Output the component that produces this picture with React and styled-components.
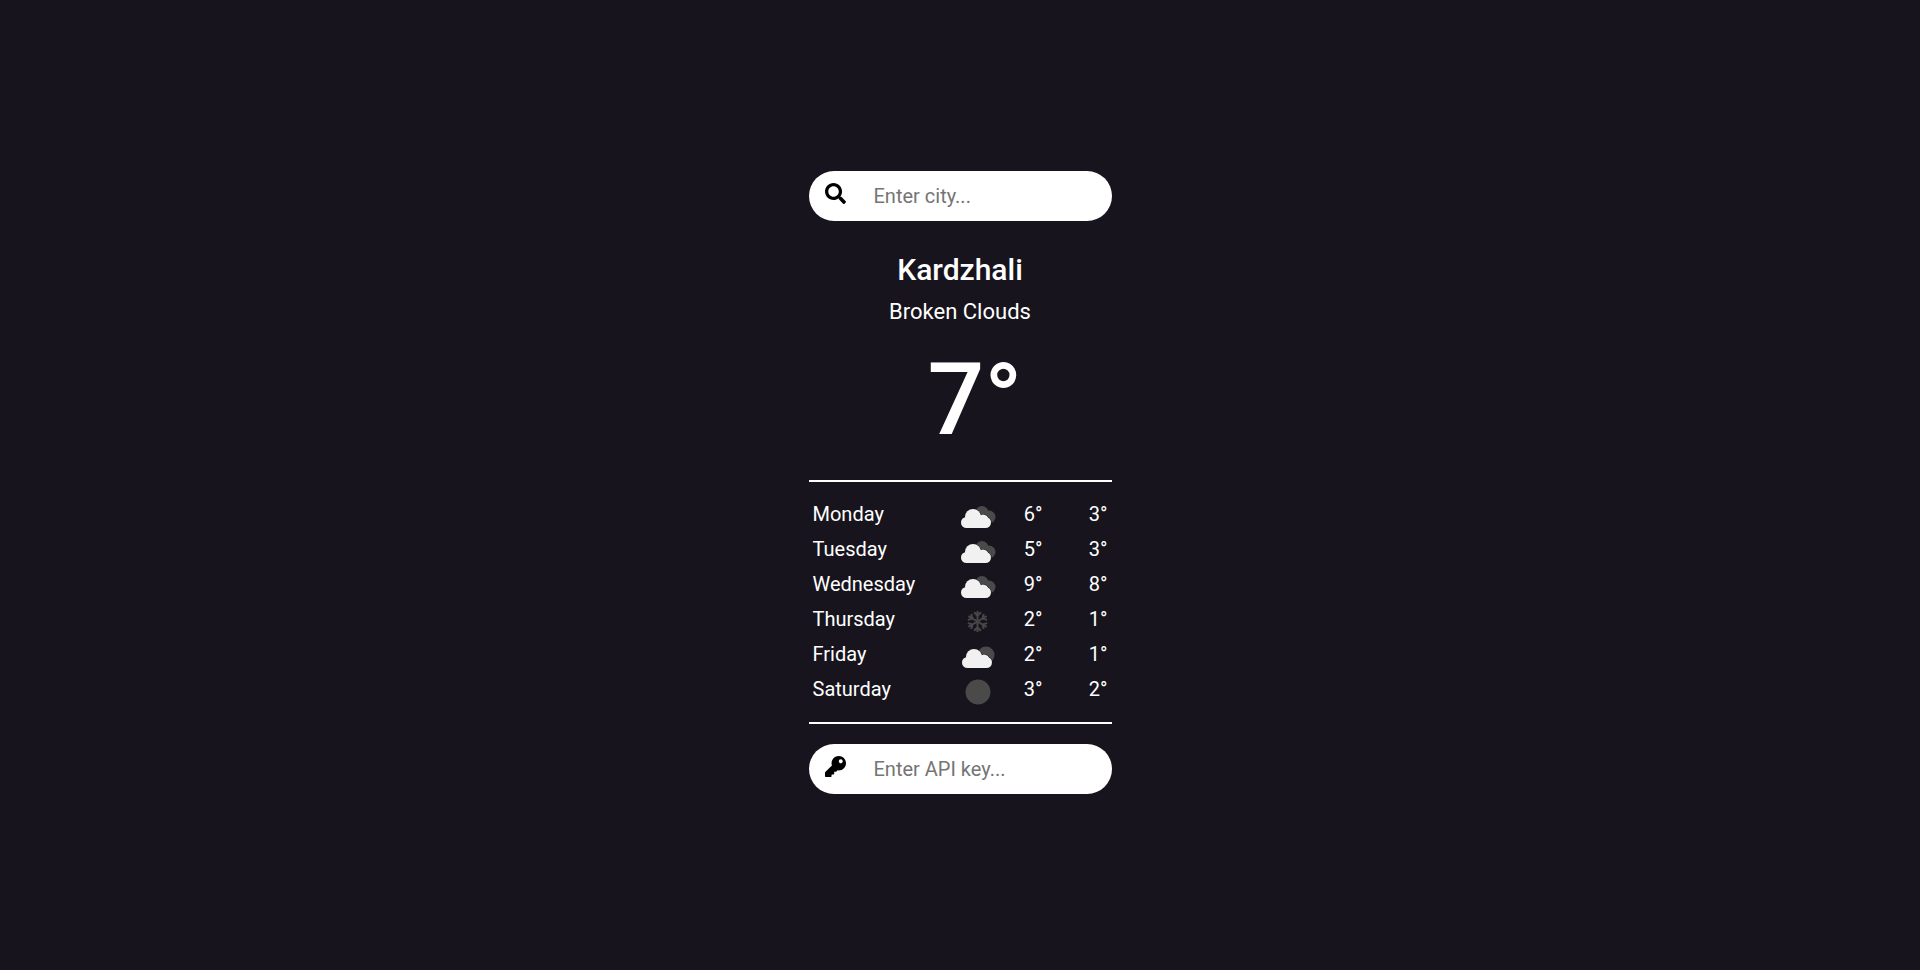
import React from "react";
import styled, { createGlobalStyle } from "styled-components";
import { FaSearch, FaKey } from "react-icons/fa";

const Global = createGlobalStyle`
  html, body { margin: 0; padding: 0; height: 100%; background: #17141d; }
  body { font-family: Roboto, "Liberation Sans", sans-serif; color: #fff; }
  input::placeholder { color: #757575; opacity: 1; }
`;

const Page = styled.main`
  min-height: 970px;
  box-sizing: border-box;
  padding-top: 171px;
  display: flex;
  justify-content: center;
  background: #17141d;
`;

const Card = styled.div`
  width: 303px;
  display: flex;
  flex-direction: column;
`;

const Field = styled.label`
  height: 50px;
  margin-top: ${(p) => p.$top || 0}px;
  border-radius: 25px;
  background: #fff;
  display: flex;
  align-items: center;
  padding-left: 16px;
  color: #000;
`;

const IconSlot = styled.span`
  width: 21px;
  height: 21px;
  margin-right: 28px;
  margin-top: -5px;
  display: flex;
  align-items: center;
  justify-content: center;
  flex: none;
`;

const TextInput = styled.input`
  border: 0;
  outline: 0;
  background: transparent;
  flex: 1;
  min-width: 0;
  padding: 0;
  font: 400 20px Roboto, sans-serif;
  color: #000;
`;

const City = styled.h1`
  margin: 32px 0 0;
  height: 34px;
  line-height: 34px;
  text-align: center;
  font-size: 30px;
  font-weight: 500;
`;

const Condition = styled.p`
  margin: 11px 0 0;
  height: 28px;
  line-height: 28px;
  text-align: center;
  font-size: 22px;
`;

const Temperature = styled.div`
  margin-top: 18px;
  height: 112px;
  line-height: 112px;
  text-align: center;
  font-size: 100px;
  font-weight: 500;
  padding-left: 30px;
`;

const Divider = styled.hr`
  margin: ${(p) => p.$top}px 0 0;
  height: 2px;
  border: 0;
  background: #fff;
`;

const Forecast = styled.div`
  margin-top: 15px;
  display: flex;
  flex-direction: column;
`;

const Row = styled.div`
  height: 35px;
  display: grid;
  grid-template-columns: 1fr 48px 41px 65px;
  align-items: center;
  padding: 0 4px;
  font-size: 20px;
`;

const Day = styled.span`
  line-height: 35px;
`;

const Temp = styled.span`
  text-align: right;
  line-height: 35px;
`;

const IconCell = styled.span`
  display: flex;
  align-items: center;
  justify-content: center;
  height: 35px;
  position: relative;
  top: 2px;
`;

const Light = "#f1f1f1";
const Dark = "#4a4a4a";
const Back = "#17141d";

const cloudParts = (
  <>
    <circle cx="15" cy="15" r="8" />
    <circle cx="8.5" cy="20.5" r="5.5" />
    <circle cx="27.5" cy="20.5" r="5.5" />
    <circle cx="25" cy="18" r="5.5" />
    <rect x="8" y="18" width="20" height="8" />
  </>
);

const CloudShape = ({ dx = 0 }) => (
  <g transform={`translate(${dx} 0)`}>
    <g fill={Back} stroke={Back} strokeWidth="1.2">{cloudParts}</g>
    <g fill={Light}>{cloudParts}</g>
  </g>
);

const Cloudy = () => (
  <svg width="40" height="30" viewBox="0 0 40 30">
    <g fill={Dark}>
      <circle cx="24" cy="10.5" r="6.5" />
      <circle cx="31" cy="15" r="6.5" />
    </g>
    <CloudShape />
  </svg>
);

const PartSun = () => (
  <svg width="40" height="30" viewBox="0 0 40 30">
    <circle cx="28" cy="13" r="8.5" fill={Dark} />
    <CloudShape dx={1} />
  </svg>
);

const Disc = () => (
  <svg width="26" height="26" viewBox="0 0 26 26">
    <circle cx="13" cy="13" r="12.5" fill={Dark} />
  </svg>
);

const Arm = ({ angle }) => (
  <g transform={`rotate(${angle} 12 12)`}>
    <path d="M12 12V1M8.4 2.4 12 6l3.6-3.6" />
  </g>
);

const Snow = () => (
  <svg width="23" height="23" viewBox="0 0 24 24" fill="none" stroke="#474747" strokeWidth="2.1">
    {[0, 60, 120, 180, 240, 300].map((a) => (
      <Arm key={a} angle={a} />
    ))}
  </svg>
);

const days = [
  ["Monday", <Cloudy />, "6°", "3°"],
  ["Tuesday", <Cloudy />, "5°", "3°"],
  ["Wednesday", <Cloudy />, "9°", "8°"],
  ["Thursday", <Snow />, "2°", "1°"],
  ["Friday", <PartSun />, "2°", "1°"],
  ["Saturday", <Disc />, "3°", "2°"],
];

export default function App() {
  return (
    <Page>
      <Global />
      <Card>
        <Field>
          <IconSlot><FaSearch size={21} /></IconSlot>
          <TextInput placeholder="Enter city..." />
        </Field>
        <City>Kardzhali</City>
        <Condition>Broken Clouds</Condition>
        <Temperature>7°</Temperature>
        <Divider $top={24} />
        <Forecast>
          {days.map(([d, icon, hi, lo]) => (
            <Row key={d}>
              <Day>{d}</Day>
              <IconCell>{icon}</IconCell>
              <Temp>{hi}</Temp>
              <Temp>{lo}</Temp>
            </Row>
          ))}
        </Forecast>
        <Divider $top={15} />
        <Field $top={20}>
          <IconSlot><FaKey size={21} /></IconSlot>
          <TextInput placeholder="Enter API key..." />
        </Field>
      </Card>
    </Page>
  );
}
